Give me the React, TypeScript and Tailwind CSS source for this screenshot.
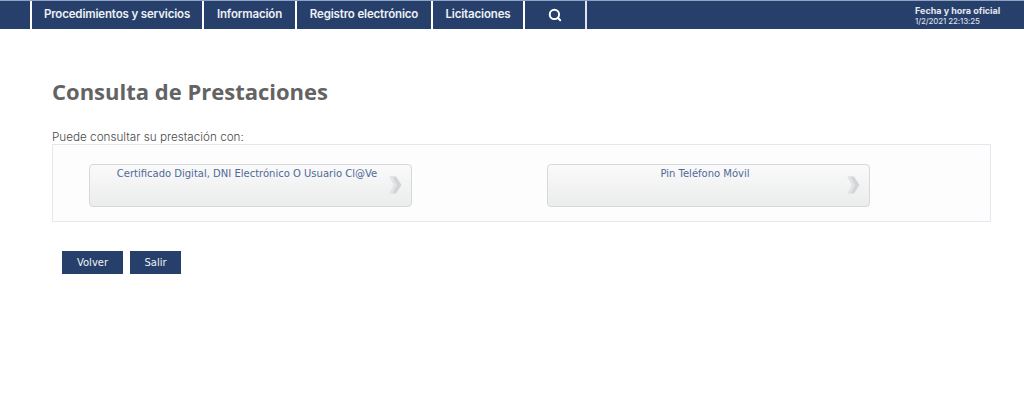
import React from 'react';
import { Search } from 'lucide-react';

const navItems = [
  { label: 'Procedimientos y servicios', width: 'w-[172px]' },
  { label: 'Información', width: 'w-[93px]' },
  { label: 'Registro electrónico', width: 'w-[136px]' },
  { label: 'Licitaciones', width: 'w-[92px]' },
];

const OptionButton = ({ label }: { label: string }) => (
  <button className="relative w-[323px] h-[43px] rounded-[4px] border border-[#d6d8db] bg-gradient-to-b from-[#fafafa] to-[#ebecec] text-center text-[10px] leading-[16px] text-[#4f6a98] font-['DejaVu_Sans',sans-serif] pb-[23px] pr-[7px]">
    {label}
    <svg className="absolute right-[9px] top-[11px]" width="13" height="18" viewBox="0 0 13 18">
      <path d="M0.5 0.5H7L12.5 9L7 17.5H0.5L5 9Z" fill="#d2d4d6" />
      <path d="M0.5 0.5H3.5L8 9L3.5 17.5H0.5L5 9Z" fill="#e3e4e5" />
    </svg>
  </button>
);

export default function App() {
  return (
    <div className="min-h-[403px] bg-white font-['Inter',sans-serif]">
      {/* Top bar */}
      <nav className="h-[29px] flex bg-[#27406b] border-t border-[#8fa3c4] text-white">
        <div className="w-[32px] border-r-2 border-white shrink-0" />
        {navItems.map((item) => (
          <a
            key={item.label}
            className={`${item.width} shrink-0 flex items-center justify-center border-r-2 border-white text-[11.5px] font-semibold tracking-[-0.15px] text-[#eef1f6]`}
          >
            {item.label}
          </a>
        ))}
        <div className="w-[62px] shrink-0 flex items-center justify-center border-r-2 border-[#dfe5ef]">
          <Search size={14} strokeWidth={3.4} />
        </div>
        <div className="ml-[328px] pt-[5px] text-[9px] leading-[10px] text-[#e4e8f0]">
          <div className="font-bold">Fecha y hora oficial</div>
          <div className="text-[8px] tracking-[-0.1px]">1/2/2021 22:13:25</div>
        </div>
      </nav>

      <main className="pl-[52px] pr-[33px]">
        <h1 className="mt-[46px] text-[22px] leading-[33px] font-bold text-[#636363] font-['Open_Sans',sans-serif]">
          Consulta de Prestaciones
        </h1>
        <p className="mt-[22px] text-[11.7px] leading-[14px] text-[#4a4a4a] font-light">Puede consultar su prestación con:</p>

        <div className="mt-0 h-[78px] border border-[#e4e7ee] bg-[#fdfdfe] flex items-start pt-[19px] pl-[36px] gap-[135px]">
          <OptionButton label="Certificado Digital, DNI Electrónico O Usuario Cl@Ve" />
          <OptionButton label="Pin Teléfono Móvil" />
        </div>

        <div className="mt-[29px] ml-[10px] flex gap-[7px]">
          <button className="w-[61px] h-[23px] bg-[#27406b] text-[#f0f2f6] text-[10px] font-['DejaVu_Sans',sans-serif]">Volver</button>
          <button className="w-[51px] h-[23px] bg-[#27406b] text-[#f0f2f6] text-[10px] font-['DejaVu_Sans',sans-serif]">Salir</button>
        </div>
      </main>
    </div>
  );
}
